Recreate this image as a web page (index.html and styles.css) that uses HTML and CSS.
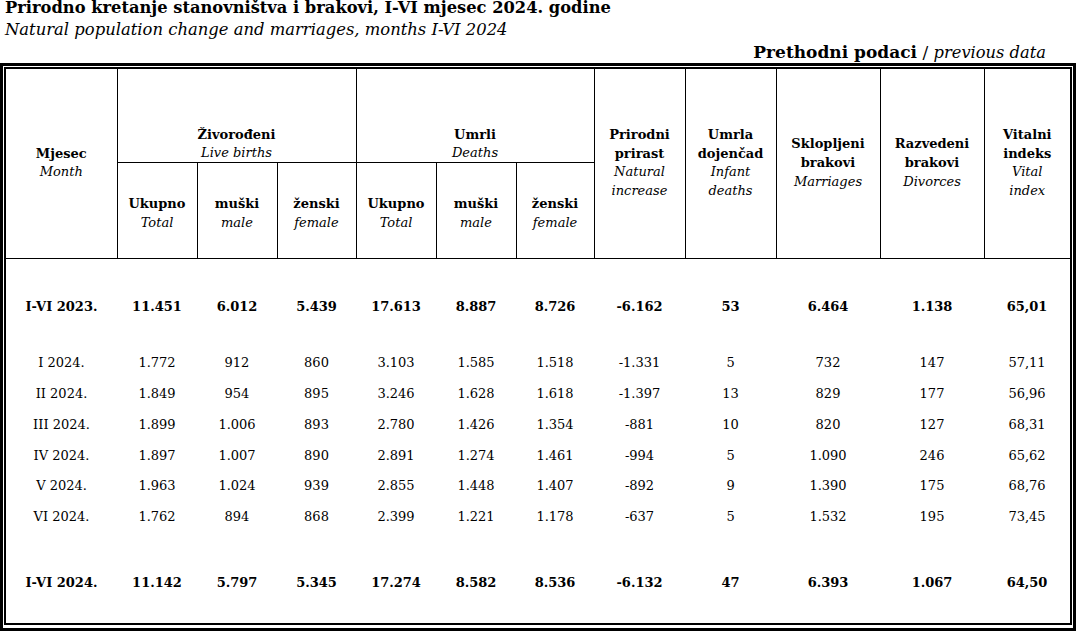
FILE: index.html
```html
<!DOCTYPE html>
<html lang="bs">
<head>
<meta charset="utf-8">
<title>Prirodno kretanje stanovništva i brakovi</title>
<link rel="stylesheet" href="styles.css">
</head>
<body>
<div class="page">
  <div class="title">Prirodno kretanje stanovništva i brakovi, I-VI mjesec 2024. godine</div>
  <div class="subtitle">Natural population change and marriages, months I-VI 2024</div>
  <div class="note"><b>Prethodni podaci</b> / <i>previous data</i></div>
  <div class="frame">
    <table class="stats">
      <colgroup>
        <col class="c-month">
        <col class="c-num"><col class="c-num"><col class="c-num3">
        <col class="c-num"><col class="c-num"><col class="c-num2">
        <col class="c-wide"><col class="c-wide">
        <col class="c-xwide"><col class="c-xwide">
        <col class="c-last">
      </colgroup>
      <thead>
        <tr class="h1">
          <th rowspan="2">Mjesec<i>Month</i></th>
          <th colspan="3" class="grp">Živorođeni<i>Live births</i></th>
          <th colspan="3" class="grp">Umrli<i>Deaths</i></th>
          <th rowspan="2">Prirodni<br>prirast<i>Natural increase</i></th>
          <th rowspan="2">Umrla<br>dojenčad<i>Infant deaths</i></th>
          <th rowspan="2">Sklopljeni<br>brakovi<i>Marriages</i></th>
          <th rowspan="2">Razvedeni<br>brakovi<i>Divorces</i></th>
          <th rowspan="2">Vitalni<br>indeks<i>Vital<br>index</i></th>
        </tr>
        <tr class="h2">
          <th>Ukupno<i>Total</i></th>
          <th>muški<i>male</i></th>
          <th>ženski<i>female</i></th>
          <th>Ukupno<i>Total</i></th>
          <th>muški<i>male</i></th>
          <th>ženski<i>female</i></th>
        </tr>
      </thead>
      <tbody>
        <tr class="sum first">
          <td>I-VI 2023.</td><td>11.451</td><td>6.012</td><td>5.439</td><td>17.613</td><td>8.887</td><td>8.726</td><td>-6.162</td><td>53</td><td>6.464</td><td>1.138</td><td>65,01</td>
        </tr>
        <tr class="month gap">
          <td>I 2024.</td><td>1.772</td><td>912</td><td>860</td><td>3.103</td><td>1.585</td><td>1.518</td><td>-1.331</td><td>5</td><td>732</td><td>147</td><td>57,11</td>
        </tr>
        <tr class="month">
          <td>II 2024.</td><td>1.849</td><td>954</td><td>895</td><td>3.246</td><td>1.628</td><td>1.618</td><td>-1.397</td><td>13</td><td>829</td><td>177</td><td>56,96</td>
        </tr>
        <tr class="month">
          <td>III 2024.</td><td>1.899</td><td>1.006</td><td>893</td><td>2.780</td><td>1.426</td><td>1.354</td><td>-881</td><td>10</td><td>820</td><td>127</td><td>68,31</td>
        </tr>
        <tr class="month">
          <td>IV 2024.</td><td>1.897</td><td>1.007</td><td>890</td><td>2.891</td><td>1.274</td><td>1.461</td><td>-994</td><td>5</td><td>1.090</td><td>246</td><td>65,62</td>
        </tr>
        <tr class="month">
          <td>V 2024.</td><td>1.963</td><td>1.024</td><td>939</td><td>2.855</td><td>1.448</td><td>1.407</td><td>-892</td><td>9</td><td>1.390</td><td>175</td><td>68,76</td>
        </tr>
        <tr class="month">
          <td>VI 2024.</td><td>1.762</td><td>894</td><td>868</td><td>2.399</td><td>1.221</td><td>1.178</td><td>-637</td><td>5</td><td>1.532</td><td>195</td><td>73,45</td>
        </tr>
        <tr class="sum last">
          <td>I-VI 2024.</td><td>11.142</td><td>5.797</td><td>5.345</td><td>17.274</td><td>8.582</td><td>8.536</td><td>-6.132</td><td>47</td><td>6.393</td><td>1.067</td><td>64,50</td>
        </tr>
      </tbody>
    </table>
  </div>
</div>
</body>
</html>
```

FILE: styles.css
```css
html, body {
  margin: 0;
  padding: 0;
  background: #ffffff;
}

body {
  font-family: "DejaVu Serif", "Liberation Serif", serif;
  color: #000000;
  width: 1076px;
  height: 632px;
  overflow: hidden;
}

.page {
  display: flex;
  flex-direction: column;
}

.title {
  font-weight: bold;
  font-size: 16.3px;
  line-height: 18px;
  height: 18px;
  margin-top: -1px;
  padding-left: 5px;
  white-space: nowrap;
}

.subtitle {
  font-style: italic;
  font-size: 16.4px;
  line-height: 20px;
  height: 20px;
  margin-top: 3px;
  padding-left: 5px;
  white-space: nowrap;
}

.note {
  font-size: 17px;
  line-height: 22px;
  height: 22px;
  text-align: right;
  padding-right: 30px;
  margin-top: 1px;
  white-space: nowrap;
}

.note i {
  font-size: 16.3px;
}

.frame {
  flex: none;
  border: 3px solid #000;
  padding: 1px;
  height: 568px;
  box-sizing: border-box;
}

.stats {
  width: 100%;
  border-collapse: collapse;
  table-layout: fixed;
  border: 2px solid #000;
  font-size: 13px;
}

.c-month { width: 112px; }
.c-num { width: 80px; }
.c-num3 { width: 79px; }
.c-num2 { width: 78px; }
.c-wide { width: 91px; }
.c-xwide { width: 104px; }
.c-last { width: 87px; }

.stats th {
  border: 1px solid #000;
  font-weight: bold;
  line-height: 18.7px;
  text-align: center;
  vertical-align: middle;
  padding: 0 2px;
}

.stats th i {
  display: block;
  font-weight: normal;
  font-style: italic;
}

.stats th.grp {
  vertical-align: bottom;
  line-height: 18px;
  padding-bottom: 0;
}

.h1 { height: 94px; }
.h2 { height: 96px; }

.h2 th {
  padding-top: 8px;
}

.stats td {
  text-align: center;
  line-height: 30.8px;
  padding: 0;
  white-space: nowrap;
}

.sum td {
  font-weight: bold;
}

.first td {
  padding-top: 33px;
}

.gap td {
  padding-top: 26px;
}

.last td {
  padding-top: 35px;
  padding-bottom: 24px;
  vertical-align: top;
}
```
